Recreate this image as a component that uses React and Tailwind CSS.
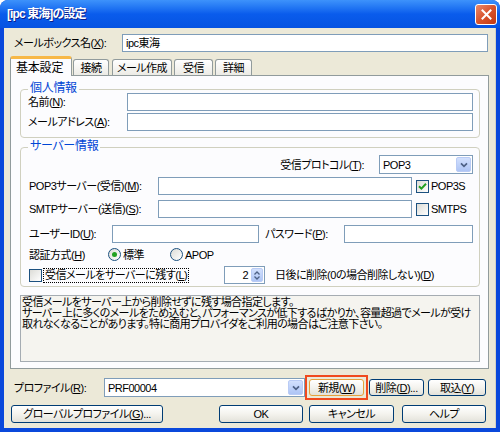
import React from 'react';

const U = ({ children }) => <span className="underline underline-offset-[1px]">{children}</span>;

const TextBox = ({ className = '', children }) => (
  <div className={`h-[18px] border border-[#7F9DB9] bg-white px-[3px] flex items-center shrink-0 ${className}`}>{children}</div>
);

const DropBtn = () => (
  <div className="ml-auto mr-[1px] w-[15px] h-[15px] rounded-[2px] border border-[#B9CBF5] bg-linear-to-b from-[#D2E0FD] to-[#AEC5F5] flex items-center justify-center">
    <svg width="8" height="6" viewBox="0 0 8 6">
      <path d="M1 1.3 L4 4.3 L7 1.3" stroke="#4D6185" strokeWidth="1.7" fill="none" />
    </svg>
  </div>
);

const Check = ({ checked }) => (
  <div className="w-[13px] h-[13px] border border-[#1C5180] bg-linear-to-br from-[#DCDCD7] to-white flex items-center justify-center shrink-0">
    {checked && (
      <svg width="9" height="9" viewBox="0 0 9 9">
        <path d="M1 4.2 L3.4 6.6 L8 1.8" stroke="#21A121" strokeWidth="2" fill="none" />
      </svg>
    )}
  </div>
);

const Radio = ({ checked }) => (
  <div className="w-[13px] h-[13px] rounded-full border border-[#1C5180] bg-linear-to-br from-[#DCDCD7] to-white flex items-center justify-center shrink-0">
    {checked && <div className="w-[5px] h-[5px] rounded-full bg-[#21A121]" />}
  </div>
);

const Btn = ({ className = '', children }) => (
  <div className={`border border-[#003C74] rounded-[3px] bg-linear-to-b from-white via-[#F4F3EE] to-[#E3E2DA] flex items-center justify-center shrink-0 ${className}`}>
    {children}
  </div>
);

const Group = ({ title, className = '', children }) => (
  <div className={`relative w-[460px] border border-[#D0D0BF] rounded-[4px] flex flex-col ${className}`}>
    <span className="absolute left-[7px] -top-[9px] px-[2px] bg-[#FCFCFE] text-[#0046D5] text-[12px] leading-[14px] tracking-[-0.3px]">{title}</span>
    {children}
  </div>
);

const tabs = [
  { label: '接続', w: 'w-[36px]', ml: 'ml-[1px]' },
  { label: 'メール作成', w: 'w-[60px]', ml: 'ml-[3px]' },
  { label: '受信', w: 'w-[39px]', ml: 'ml-[2px]' },
  { label: '詳細', w: 'w-[37px]', ml: 'ml-[2px]' },
];

export default function App() {
  return (
    <div className="w-[500px] h-[432px] rounded-t-[8px] overflow-hidden bg-[#0A48DB] flex flex-col text-[11px] leading-[14px] tracking-[-0.5px] whitespace-nowrap text-black [font-family:'Liberation_Sans','Noto_Sans_CJK_JP',sans-serif] [font-feature-settings:'palt']">
      {/* title bar */}
      <div className="h-[28px] shrink-0 bg-linear-to-b from-[#3D92FB] via-[#0A5CEC] to-[#0653E2] flex items-center pl-[7px] pr-[3px]">
        <span className="text-white font-bold text-[12px] tracking-[-0.9px] [text-shadow:1px_1px_0_#0A1E8C]">[ipc 東海]の設定</span>
        <div className="ml-auto w-[22px] h-[21px] rounded-[3px] border border-white bg-linear-to-br from-[#E9896B] via-[#D8532C] to-[#C2380F] flex items-center justify-center">
          <svg width="11" height="11" viewBox="0 0 11 11">
            <path d="M1.5 1.5 L9.5 9.5 M9.5 1.5 L1.5 9.5" stroke="white" strokeWidth="2" strokeLinecap="square" />
          </svg>
        </div>
      </div>

      {/* body */}
      <div className="flex-1 mx-[4px] mb-[4px] bg-[#ECE9D8] pt-[6px] px-[6px] flex flex-col border-r border-[#D6D2C2]">
        <div className="flex items-center h-[18px]">
          <span className="w-[112px] pl-[4px]">メールボックス名(<U>X</U>):</span>
          <TextBox className="w-[366px]">ipc東海</TextBox>
        </div>

        {/* tabs */}
        <div className="mt-[4px] h-[19px] flex items-end">
          <div className="relative z-10 -mb-[1px] w-[62px] h-[20px] bg-[#FCFCFE] border border-b-0 border-[#919B9C] border-t-[3px] border-t-[#F7B847] rounded-t-[3px] flex items-center pl-[5px] text-[12px] tracking-[-0.2px]">
            基本設定
          </div>
          {tabs.map((t) => (
            <div key={t.label} className={`${t.w} ${t.ml} h-[16px] border border-b-0 border-[#919B9C] rounded-t-[3px] bg-linear-to-b from-white to-[#ECEBE5] flex items-center justify-center`}>
              {t.label}
            </div>
          ))}
        </div>

        {/* tab panel */}
        <div className="h-[294px] w-[479px] border border-[#919B9C] bg-[#FCFCFE] pt-[13px] pl-[9px] pr-[8px] flex flex-col">
          <Group title="個人情報" className="h-[49px] pt-[3px] pl-[7px] gap-[2px]">
            <div className="flex items-center h-[18px]">
              <span className="w-[99px]">名前(<U>N</U>):</span>
              <TextBox className="w-[346px]" />
            </div>
            <div className="flex items-center h-[18px]">
              <span className="w-[99px]">メールアドレス(<U>A</U>):</span>
              <TextBox className="w-[346px]" />
            </div>
          </Group>

          <Group title="サーバー情報" className="mt-[9px] h-[140px] pt-[7px] pl-[8px]">
            <div className="h-[19px] flex items-center justify-end pr-[6px] gap-[15px]">
              <span>受信プロトコル(<U>T</U>):</span>
              <div className="w-[94px] h-[19px] border border-[#7F9DB9] bg-white flex items-center pl-[3px]">
                POP3
                <DropBtn />
              </div>
            </div>
            <div className="mt-[3px] h-[18px] flex items-center">
              <span className="w-[129px]">POP3サーバー(受信)(<U>M</U>):</span>
              <TextBox className="w-[254px]" />
              <div className="ml-[4px]"><Check checked /></div>
              <span className="ml-[2px]">POP3S</span>
            </div>
            <div className="mt-[5px] h-[18px] flex items-center">
              <span className="w-[129px]">SMTPサーバー(送信)(<U>S</U>):</span>
              <TextBox className="w-[254px]" />
              <div className="ml-[4px]"><Check /></div>
              <span className="ml-[2px]">SMTPS</span>
            </div>
            <div className="mt-[7px] h-[18px] flex items-center">
              <span className="w-[83px]">ユーザーID(<U>U</U>):</span>
              <TextBox className="w-[147px]" />
              <span className="ml-[6px] w-[79px]">パスワード(<U>P</U>):</span>
              <TextBox className="w-[129px]" />
            </div>
            <div className="mt-[3px] h-[17px] flex items-center">
              <span className="w-[79px]">認証方式(<U>H</U>)</span>
              <div className="w-[62px] flex items-center gap-[2px]">
                <Radio checked />
                <span>標準</span>
              </div>
              <Radio />
              <span className="ml-[2px]">APOP</span>
            </div>
            <div className="mt-[3px] h-[18px] flex items-center">
              <div className="w-[195px] flex items-center">
                <Check />
                <span className="ml-[1px] px-[1px] border border-dotted border-black leading-[13px]">受信メールをサーバーに残す(<U>L</U>)</span>
              </div>
              <div className="w-[41px] h-[18px] border border-[#7F9DB9] bg-white flex items-center">
                <span className="flex-1 text-right pr-[3px]">2</span>
                <div className="w-[12px] h-[14px] mr-[1px] rounded-[2px] border border-[#B9CBF5] bg-linear-to-b from-[#D2E0FD] to-[#AEC5F5] flex flex-col items-center justify-center gap-[1px]">
                  <svg width="6" height="4" viewBox="0 0 6 4"><path d="M0.5 3.5 L3 1 L5.5 3.5" stroke="#4D6185" strokeWidth="1.3" fill="none" /></svg>
                  <svg width="6" height="4" viewBox="0 0 6 4"><path d="M0.5 0.5 L3 3 L5.5 0.5" stroke="#4D6185" strokeWidth="1.3" fill="none" /></svg>
                </div>
              </div>
              <span className="ml-[10px]">日後に削除(0の場合削除しない)(<U>D</U>)</span>
            </div>
          </Group>

          <div className="mt-[8px] h-[67px] w-[460px] border border-[#A5ACB2] bg-[#F5F4EF] pt-[1px] pl-[1px] leading-[11px] tracking-[-0.6px] overflow-hidden">
            受信メールをサーバー上から削除せずに残す場合指定します。
            <br />
            サーバー上に多くのメールをため込むと、パフォーマンスが低下するばかりか、容量超過でメールが受け
            <br />
            取れなくなることがあります。特に商用プロバイダをご利用の場合はご注意下さい。
          </div>
        </div>

        {/* profile row */}
        <div className="mt-[9px] h-[19px] flex items-center">
          <span className="w-[94px] pl-[4px]">プロファイル(<U>R</U>):</span>
          <div className="w-[201px] h-[19px] border border-[#7F9DB9] bg-white flex items-center pl-[3px]">
            PRF00004
            <DropBtn />
          </div>
          <div className="relative ml-[4px]">
            <div className="absolute -inset-[4px] border-2 border-[#F04A1E]" />
            <Btn className="w-[55px] h-[17px] border-[#E5A23C]">新規(<U>W</U>)</Btn>
          </div>
          <Btn className="ml-[5px] w-[55px] h-[17px]">削除(<U>D</U>)...</Btn>
          <Btn className="ml-[4px] w-[58px] h-[17px]">取込(<U>Y</U>)</Btn>
        </div>

        {/* bottom buttons */}
        <div className="mt-[8px] h-[18px] flex items-center">
          <Btn className="ml-[1px] w-[152px] h-[18px]">グローバルプロファイル(<U>G</U>)...</Btn>
          <Btn className="ml-[56px] w-[84px] h-[18px]">OK</Btn>
          <Btn className="ml-[6px] w-[85px] h-[18px]">キャンセル</Btn>
          <Btn className="ml-[8px] w-[84px] h-[18px]">ヘルプ</Btn>
        </div>
      </div>
    </div>
  );
}
